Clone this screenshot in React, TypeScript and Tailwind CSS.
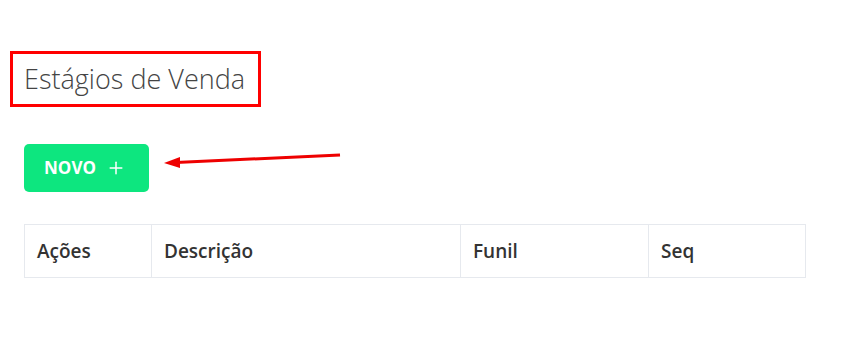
import { Plus } from "lucide-react";

const columns = [
  { label: "Ações", width: "w-[127px]" },
  { label: "Descrição", width: "w-[309px]" },
  { label: "Funil", width: "w-[188px]" },
  { label: "Seq", width: "w-[157px]" },
];

const App = () => {
  return (
    <div className="relative min-h-[352px] bg-white font-['Open_Sans',sans-serif]">
      <div className="pl-[10px] pt-[51px]">
        <div className="inline-block border-[3px] border-[#f00] py-[6px] pl-[11px] pr-[13px]">
          <h1 className="text-[27px] font-light leading-[38px] text-[#444]">
            Estágios de Venda
          </h1>
        </div>
      </div>

      <div className="pl-6 pt-[37px]">
        <button className="flex h-12 w-[125px] items-center justify-center gap-[10px] rounded-[5px] bg-[#0de67f] pr-[3px] text-white">
          <span className="text-[17px] font-bold">NOVO</span>
          <Plus size={20} strokeWidth={1.8} />
        </button>
      </div>

      <div className="pl-6 pt-[32px]">
        <table className="border-collapse">
          <thead>
            <tr>
              {columns.map((c) => (
                <th
                  key={c.label}
                  className={`${c.width} h-[53px] border border-[#e6e9ee] px-3 text-left text-[19px] font-semibold text-[#333]`}
                >
                  {c.label}
                </th>
              ))}
            </tr>
          </thead>
        </table>
      </div>

      <svg
        className="absolute left-0 top-0"
        width="841"
        height="352"
        viewBox="0 0 841 352"
      >
        <line x1="340" y1="155" x2="176" y2="162.5" stroke="#e00" strokeWidth="3" />
        <polygon points="164,163 180,157 180,168" fill="#e00" />
      </svg>
    </div>
  );
};

export default App;
